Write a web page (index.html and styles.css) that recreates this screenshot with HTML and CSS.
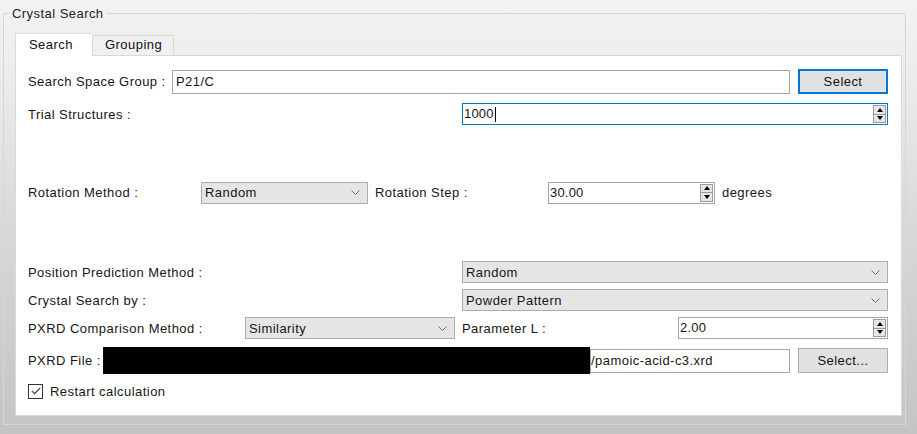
FILE: index.html
```html
<!DOCTYPE html>
<html>
<head>
<meta charset="utf-8">
<link rel="stylesheet" href="styles.css">
</head>
<body>
<fieldset class="group">
  <legend class="group-title">Crystal Search</legend>
  <div class="tabs">
    <div class="tabbar">
      <div class="tab active">Search</div>
      <div class="tab second">Grouping</div>
    </div>
    <div class="pane">
      <div class="row r1">
        <span class="lbl w-sg">Search Space Group :</span>
        <div class="field grow">P21/C</div>
        <button class="btn default">Select</button>
      </div>
      <div class="row r2">
        <span class="lbl w-wide">Trial Structures :</span>
        <div class="spin grow focus">
          <span class="val">1000<span class="caret"></span></span>
          <span class="arrows"><span class="up"></span><span class="down"></span></span>
        </div>
      </div>
      <div class="row r3">
        <span class="lbl w-rot">Rotation Method :</span>
        <div class="combo w-rotc">
          <span>Random</span>
          <svg class="chev" width="9" height="5" viewBox="0 0 9 5"><polyline points="0.5,0.5 4.5,4.5 8.5,0.5" fill="none" stroke="#707070" stroke-width="1"/></svg>
        </div>
        <span class="lbl w-step">Rotation Step :</span>
        <div class="spin w-rotc">
          <span class="val">30.00</span>
          <span class="arrows"><span class="up"></span><span class="down"></span></span>
        </div>
        <span class="lbl unit">degrees</span>
      </div>
      <div class="row r4">
        <span class="lbl w-wide">Position Prediction Method :</span>
        <div class="combo grow">
          <span>Random</span>
          <svg class="chev" width="9" height="5" viewBox="0 0 9 5"><polyline points="0.5,0.5 4.5,4.5 8.5,0.5" fill="none" stroke="#707070" stroke-width="1"/></svg>
        </div>
      </div>
      <div class="row r5">
        <span class="lbl w-wide">Crystal Search by :</span>
        <div class="combo grow">
          <span>Powder Pattern</span>
          <svg class="chev" width="9" height="5" viewBox="0 0 9 5"><polyline points="0.5,0.5 4.5,4.5 8.5,0.5" fill="none" stroke="#707070" stroke-width="1"/></svg>
        </div>
      </div>
      <div class="row r6">
        <span class="lbl w-cmp">PXRD Comparison Method :</span>
        <div class="combo w-cmpc">
          <span>Similarity</span>
          <svg class="chev" width="9" height="5" viewBox="0 0 9 5"><polyline points="0.5,0.5 4.5,4.5 8.5,0.5" fill="none" stroke="#707070" stroke-width="1"/></svg>
        </div>
        <span class="lbl w-par">Parameter L :</span>
        <div class="spin grow">
          <span class="val">2.00</span>
          <span class="arrows"><span class="up"></span><span class="down"></span></span>
        </div>
      </div>
      <div class="row r7">
        <span class="lbl w-file">PXRD File :</span>
        <span class="redact"></span>
        <div class="field grow file">/pamoic-acid-c3.xrd</div>
        <button class="btn">Select...</button>
      </div>
      <div class="row r8">
        <span class="check">
          <svg width="10" height="8" viewBox="0 0 10 8"><polyline points="0.8,3.8 3.6,6.6 9.2,0.8" fill="none" stroke="#333" stroke-width="1.1"/></svg>
        </span>
        <span class="lbl">Restart calculation</span>
      </div>
    </div>
  </div>
</fieldset>
</body>
</html>
```
FILE: styles.css
```css
html, body {
  margin: 0;
  padding: 0;
}
body {
  width: 917px;
  height: 434px;
  overflow: hidden;
  background: linear-gradient(to bottom, #f2f2f2 0px, #eeeeee 60px, #d6d6d6 250px, #c4c4c4 434px);
  font-family: "Liberation Sans", Arial, sans-serif;
  font-size: 13px;
  letter-spacing: 0.45px;
  color: #161616;
}
.group {
  margin: 6px 11px 9px 3px;
  padding: 12px 3px 7px 11px;
  border: 1px solid #d6d6d6;
  box-sizing: border-box;
  height: 419px;
}
.group-title {
  padding: 0 2px;
  margin-left: -5px;
  line-height: 15px;
  color: #222;
}
.tabs {
  display: flex;
  flex-direction: column;
}
.tabbar {
  display: flex;
  align-items: flex-end;
  height: 22px;
}
.tab {
  box-sizing: border-box;
  height: 20px;
  line-height: 18px;
  padding: 0 0 0 12px;
  width: 82px;
  border: 1px solid #d9d9d9;
  border-bottom: none;
  background: #f0f0f0;
  color: #111;
}
.tab.active {
  width: 77px;
  height: 23px;
  margin-bottom: -1px;
  background: #fff;
  padding: 0 0 0 13px;
  line-height: 21px;
  position: relative;
  z-index: 1;
  border-right: none;
}
.pane {
  box-sizing: border-box;
  height: 361px;
  background: #fff;
  border: 1px solid #d9d9d9;
  padding: 13px 13px 0 12px;
  display: flex;
  flex-direction: column;
}
.row {
  display: flex;
  align-items: center;
}
.r1 { height: 25px; }
.r2 { height: 22px; margin-top: 9px; }
.r3 { height: 23px; margin-top: 56px; }
.r4 { height: 22px; margin-top: 57px; }
.r5 { height: 22px; margin-top: 6px; }
.r6 { height: 22px; margin-top: 6px; }
.r7 { height: 27px; margin-top: 8px; }
.r8 { height: 16px; margin-top: 9px; }

.lbl { white-space: nowrap; }
.w-sg { width: 144px; flex: none; }
.w-wide { width: 434px; flex: none; }
.w-rot { width: 173px; flex: none; }
.w-rotc { width: 167px; flex: none; }
.w-step { width: 180px; flex: none; padding-left: 7px; box-sizing: border-box; }
.unit { padding-left: 7px; }
.w-cmp { width: 217px; flex: none; }
.w-cmpc { width: 210px; flex: none; }
.w-par { width: 223px; flex: none; padding-left: 7px; box-sizing: border-box; }
.w-file { width: 75px; flex: none; }
.grow { flex: 1; min-width: 0; }

.field {
  box-sizing: border-box;
  height: 24px;
  border: 1px solid #a6a6a6;
  padding: 0 3px;
  line-height: 22px;
  background: #fff;
  white-space: nowrap;
  overflow: hidden;
}
.field.file {
  padding-left: 0;
}
.redact {
  width: 487px;
  height: 27px;
  background: #000;
  flex: none;
}
.btn {
  box-sizing: border-box;
  flex: none;
  width: 90px;
  height: 25px;
  margin-left: 8px;
  border: 1px solid #adadad;
  background: #e1e1e1;
  font: inherit;
  letter-spacing: inherit;
  color: #111;
  padding: 0;
}
.btn.default {
  border: 1px solid #0078d7;
  box-shadow: inset 0 0 0 1px #0078d7;
}
.spin {
  box-sizing: border-box;
  height: 22px;
  border: 1px solid #a6a6a6;
  background: #fff;
  display: flex;
  align-items: center;
  justify-content: space-between;
  padding: 0 1px 0 1px;
}
.spin.focus {
  border-color: #0078d7;
}
.spin .val {
  line-height: 20px;
  display: flex;
  align-items: center;
  letter-spacing: 0.2px;
}
.caret {
  display: inline-block;
  width: 1px;
  height: 15px;
  background: #000;
  margin-left: 1px;
}
.arrows {
  display: flex;
  flex-direction: column;
  width: 13px;
  height: 18px;
  box-sizing: border-box;
  border: 1px solid #9a9a9a;
  background: #e6e6e6;
}
.arrows .up, .arrows .down {
  flex: 1;
  display: flex;
  align-items: center;
  justify-content: center;
}
.arrows .up {
  border-bottom: 1px solid #9a9a9a;
}
.arrows .up::before {
  content: "";
  border-left: 3.5px solid transparent;
  border-right: 3.5px solid transparent;
  border-bottom: 4px solid #000;
}
.arrows .down::before {
  content: "";
  border-left: 3.5px solid transparent;
  border-right: 3.5px solid transparent;
  border-top: 4px solid #000;
}
.combo {
  box-sizing: border-box;
  height: 22px;
  border: 1px solid #adadad;
  background: #e5e5e5;
  display: flex;
  align-items: center;
  justify-content: space-between;
  padding: 0 7px 0 3px;
}
.check {
  box-sizing: border-box;
  width: 15px;
  height: 15px;
  border: 1px solid #333;
  background: #fff;
  display: flex;
  align-items: center;
  justify-content: center;
  margin-left: 0;
  margin-right: 7px;
}
```
